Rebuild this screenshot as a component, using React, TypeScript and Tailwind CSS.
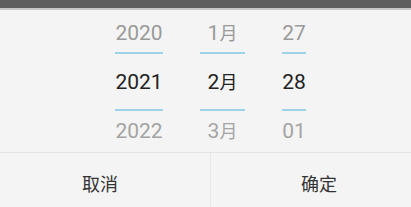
const years = ["2020", "2021", "2022"];
const months = ["1", "2", "3"];
const days = ["27", "28", "01"];

function Label({ text, month }: { text: string; month?: boolean }) {
  if (!month) return <>{text}</>;
  return (
    <>
      {text}
      <span className="text-[18px]">月</span>
    </>
  );
}

function Wheel({ items, width, month }: { items: string[]; width: string; month?: boolean }) {
  return (
    <div className={`flex flex-col items-center ${width}`}>
      <div className="h-[25px] leading-[25px] text-[#9a9a9a]">
        <Label text={items[0]} month={month} />
      </div>
      <div className="mt-[6px] h-[2px] w-full bg-[#9dd3e8]" />
      <div className="mt-[16px] h-[25px] leading-[25px] text-[#222222]">
        <Label text={items[1]} month={month} />
      </div>
      <div className="mt-[14px] h-[2px] w-full bg-[#9dd3e8]" />
      <div className="mt-[8px] h-[25px] leading-[25px] text-[#a4a4a4]">
        <Label text={items[2]} month={month} />
      </div>
    </div>
  );
}

export default function App() {
  return (
    <div
      className="h-[207px] w-[411px] overflow-hidden bg-[#f4f4f4]"
      style={{ fontFamily: "Roboto, 'Noto Sans CJK SC', sans-serif" }}
    >
      <div className="h-[8px] bg-[#5f5f5f]" />
      <div className="h-[2px] bg-[#c8c8c8]" />
      <div className="flex h-[142px] gap-[37px] pl-[115px] pt-[11px] text-[21px]">
        <Wheel items={years} width="w-[48px]" />
        <Wheel items={months} width="w-[45px]" month />
        <Wheel items={days} width="w-[24px]" />
      </div>
      <div className="flex h-[64px] border-t border-[#e4e4e4] text-[18px] text-[#333333]">
        <button className="flex w-[210px] items-center justify-center pr-[10px]">取消</button>
        <button className="flex flex-1 items-center justify-center border-l border-[#e8e8e8] pl-[16px]">确定</button>
      </div>
    </div>
  );
}
